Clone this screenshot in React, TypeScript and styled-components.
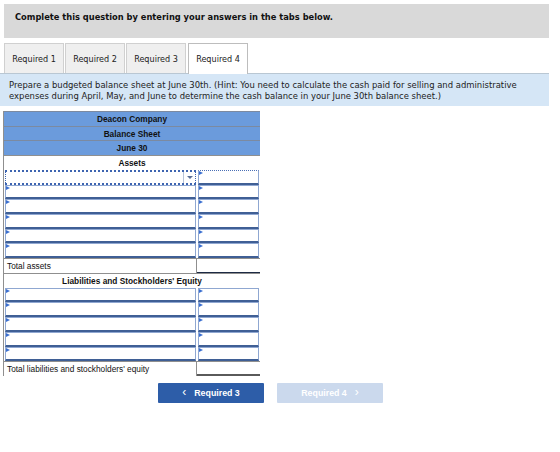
import styled, { createGlobalStyle } from 'styled-components'

const GlobalStyle = createGlobalStyle`
    body {
        margin: 0;
        background: #fff;
        font-family: 'DejaVu Sans', Verdana, sans-serif;
    }
`

const tabs = ['Required 1', 'Required 2', 'Required 3', 'Required 4']
const assetRows = 5
const liabilityRows = 5

export default function App() {
    return (
        <>
            <GlobalStyle />
            <Page>
                <Header>Complete this question by entering your answers in the tabs below.</Header>
                <Tabs>
                    {tabs.map((t, i) => (
                        <Tab key={t} $active={i === 3}>
                            {t}
                        </Tab>
                    ))}
                </Tabs>
                <Info>
                    Prepare a budgeted balance sheet at June 30th. (Hint: You need to calculate the cash paid for selling and administrative
                    <br />
                    expenses during April, May, and June to determine the cash balance in your June 30th balance sheet.)
                </Info>
                <Sheet>
                    <TitleRow>Deacon Company</TitleRow>
                    <TitleRow>Balance Sheet</TitleRow>
                    <TitleRow>June 30</TitleRow>
                    <SectionRow>Assets</SectionRow>
                    <FocusCell>
                        <Caret />
                    </FocusCell>
                    <InputCell $dotted />
                    {Array.from({ length: assetRows }).map((_, i) => (
                        <Pair key={'a' + i}>
                            <InputCell />
                            <InputCell />
                        </Pair>
                    ))}
                    <LabelCell>Total assets</LabelCell>
                    <TotalCell />
                    <SectionRow>Liabilities and Stockholders' Equity</SectionRow>
                    {Array.from({ length: liabilityRows }).map((_, i) => (
                        <Pair key={'l' + i}>
                            <InputCell />
                            <InputCell />
                        </Pair>
                    ))}
                    <LabelCell>Total liabilities and stockholders' equity</LabelCell>
                    <TotalCell $final />
                </Sheet>
                <Buttons>
                    <NavButton>
                        <span>&lsaquo;</span> Required 3
                    </NavButton>
                    <NavButton $disabled>
                        Required 4 <span>&rsaquo;</span>
                    </NavButton>
                </Buttons>
            </Page>
        </>
    )
}

const Pair = ({ children }: { children: React.ReactNode }) => <>{children}</>

const Page = styled.div`
    padding: 4px 11px 0 4px;
    width: 545px;
`

const Header = styled.div`
    height: 34px;
    box-sizing: border-box;
    padding: 8px 0 0 11px;
    background: #d9d9d9;
    font-size: 8.3px;
    font-weight: bold;
    color: #111;
`

const Tabs = styled.div`
    display: flex;
    gap: 1px;
    margin-top: 5px;
    position: relative;
    z-index: 1;
`

const Tab = styled.div<{ $active?: boolean }>`
    width: 60px;
    box-sizing: border-box;
    display: flex;
    align-items: center;
    justify-content: center;
    font-size: 8.1px;
    color: #222;
    border: 1px solid ${p => (p.$active ? '#bdbdbd' : '#d0d0d0')};
    border-bottom: none;
    background: ${p => (p.$active ? '#fff' : '#efefef')};
    margin-left: ${p => (p.$active ? '1px' : '0')};
    height: ${p => (p.$active ? '31px' : '30px')};
    margin-bottom: ${p => (p.$active ? '-1px' : '0')};
`

const Info = styled.div`
    margin-left: -4px;
    width: 549px;
    box-sizing: border-box;
    padding: 6px 9px 4px;
    background: #d5e6f6;
    border-top: 1px solid #b9c7d3;
    font-size: 8.45px;
    line-height: 11px;
    white-space: nowrap;
    color: #222;
`

const Sheet = styled.div`
    display: grid;
    grid-template-columns: 193px 63px;
    grid-auto-rows: 14.72px;
    width: 256px;
    margin: 5px 0 0 -1px;
    box-sizing: border-box;
    border-left: 1px solid #8f8f8f;
    border-right: 1px solid #8f8f8f;
    font-family: 'Liberation Sans', Arial, sans-serif;
    font-size: 8.3px;
    color: #111;
`

const TitleRow = styled.div`
    grid-column: 1 / 3;
    display: flex;
    align-items: center;
    justify-content: center;
    background: #6b9bdc;
    border-top: 1px solid #7c8aa0;
    font-weight: bold;
`

const SectionRow = styled.div`
    grid-column: 1 / 3;
    display: flex;
    align-items: center;
    justify-content: center;
    background: #fff;
    border-top: 1px solid #8f8f8f;
    font-weight: bold;
`

const InputCell = styled.div<{ $dotted?: boolean }>`
    position: relative;
    box-sizing: border-box;
    margin: 0 1px 0 1px;
    border: 1px solid #8fa7d1;
    border-top: ${p => (p.$dotted ? '1px dotted #4a6fb5' : '1px solid #8fa7d1')};
    border-bottom: 2px solid #3f5f95;
    background: #fff;
    &::before {
        content: '';
        position: absolute;
        top: 0;
        left: 0;
        border-top: 2px solid transparent;
        border-bottom: 2px solid transparent;
        border-left: 4px solid #3b6fd0;
    }
`

const FocusCell = styled.div`
    position: relative;
    box-sizing: border-box;
    margin: 0 1px 0 1px;
    border: 1px dotted #3d64b0;
    border-width: 2px 1px 2px 1px;
    background: #fff;
`

const Caret = styled.div`
    position: absolute;
    right: 0;
    top: 0;
    bottom: 0;
    width: 11px;
    border-left: 1px solid #b8c4d8;
    &::after {
        content: '';
        position: absolute;
        top: 4px;
        left: 3px;
        border-left: 3px solid transparent;
        border-right: 3px solid transparent;
        border-top: 3px solid #5a6f96;
    }
`

const LabelCell = styled.div`
    display: flex;
    align-items: center;
    padding-left: 3px;
    border-top: 1px solid #8f8f8f;
    border-right: 1px solid #8f8f8f;
    background: #fff;
`

const TotalCell = styled.div<{ $final?: boolean }>`
    box-sizing: border-box;
    border-top: 1px solid #8f8f8f;
    border-bottom: ${p => (p.$final ? '2px solid #5a5a5a' : '1px solid #1d2a44')};
    background: #fff;
`

const Buttons = styled.div`
    display: flex;
    gap: 13px;
    margin: 7px 0 0 154px;
`

const NavButton = styled.button<{ $disabled?: boolean }>`
    width: 106px;
    height: 20px;
    border: none;
    border-radius: 1px;
    background: ${p => (p.$disabled ? '#cbd9ed' : '#2d5da8')};
    color: #fff;
    font-family: 'Liberation Sans', Arial, sans-serif;
    font-size: 8.8px;
    font-weight: bold;
    display: flex;
    align-items: center;
    justify-content: center;
    gap: 8px;
    cursor: ${p => (p.$disabled ? 'default' : 'pointer')};
    span {
        font-size: 12px;
        font-weight: normal;
        line-height: 1;
        margin-top: -2px;
    }
`
